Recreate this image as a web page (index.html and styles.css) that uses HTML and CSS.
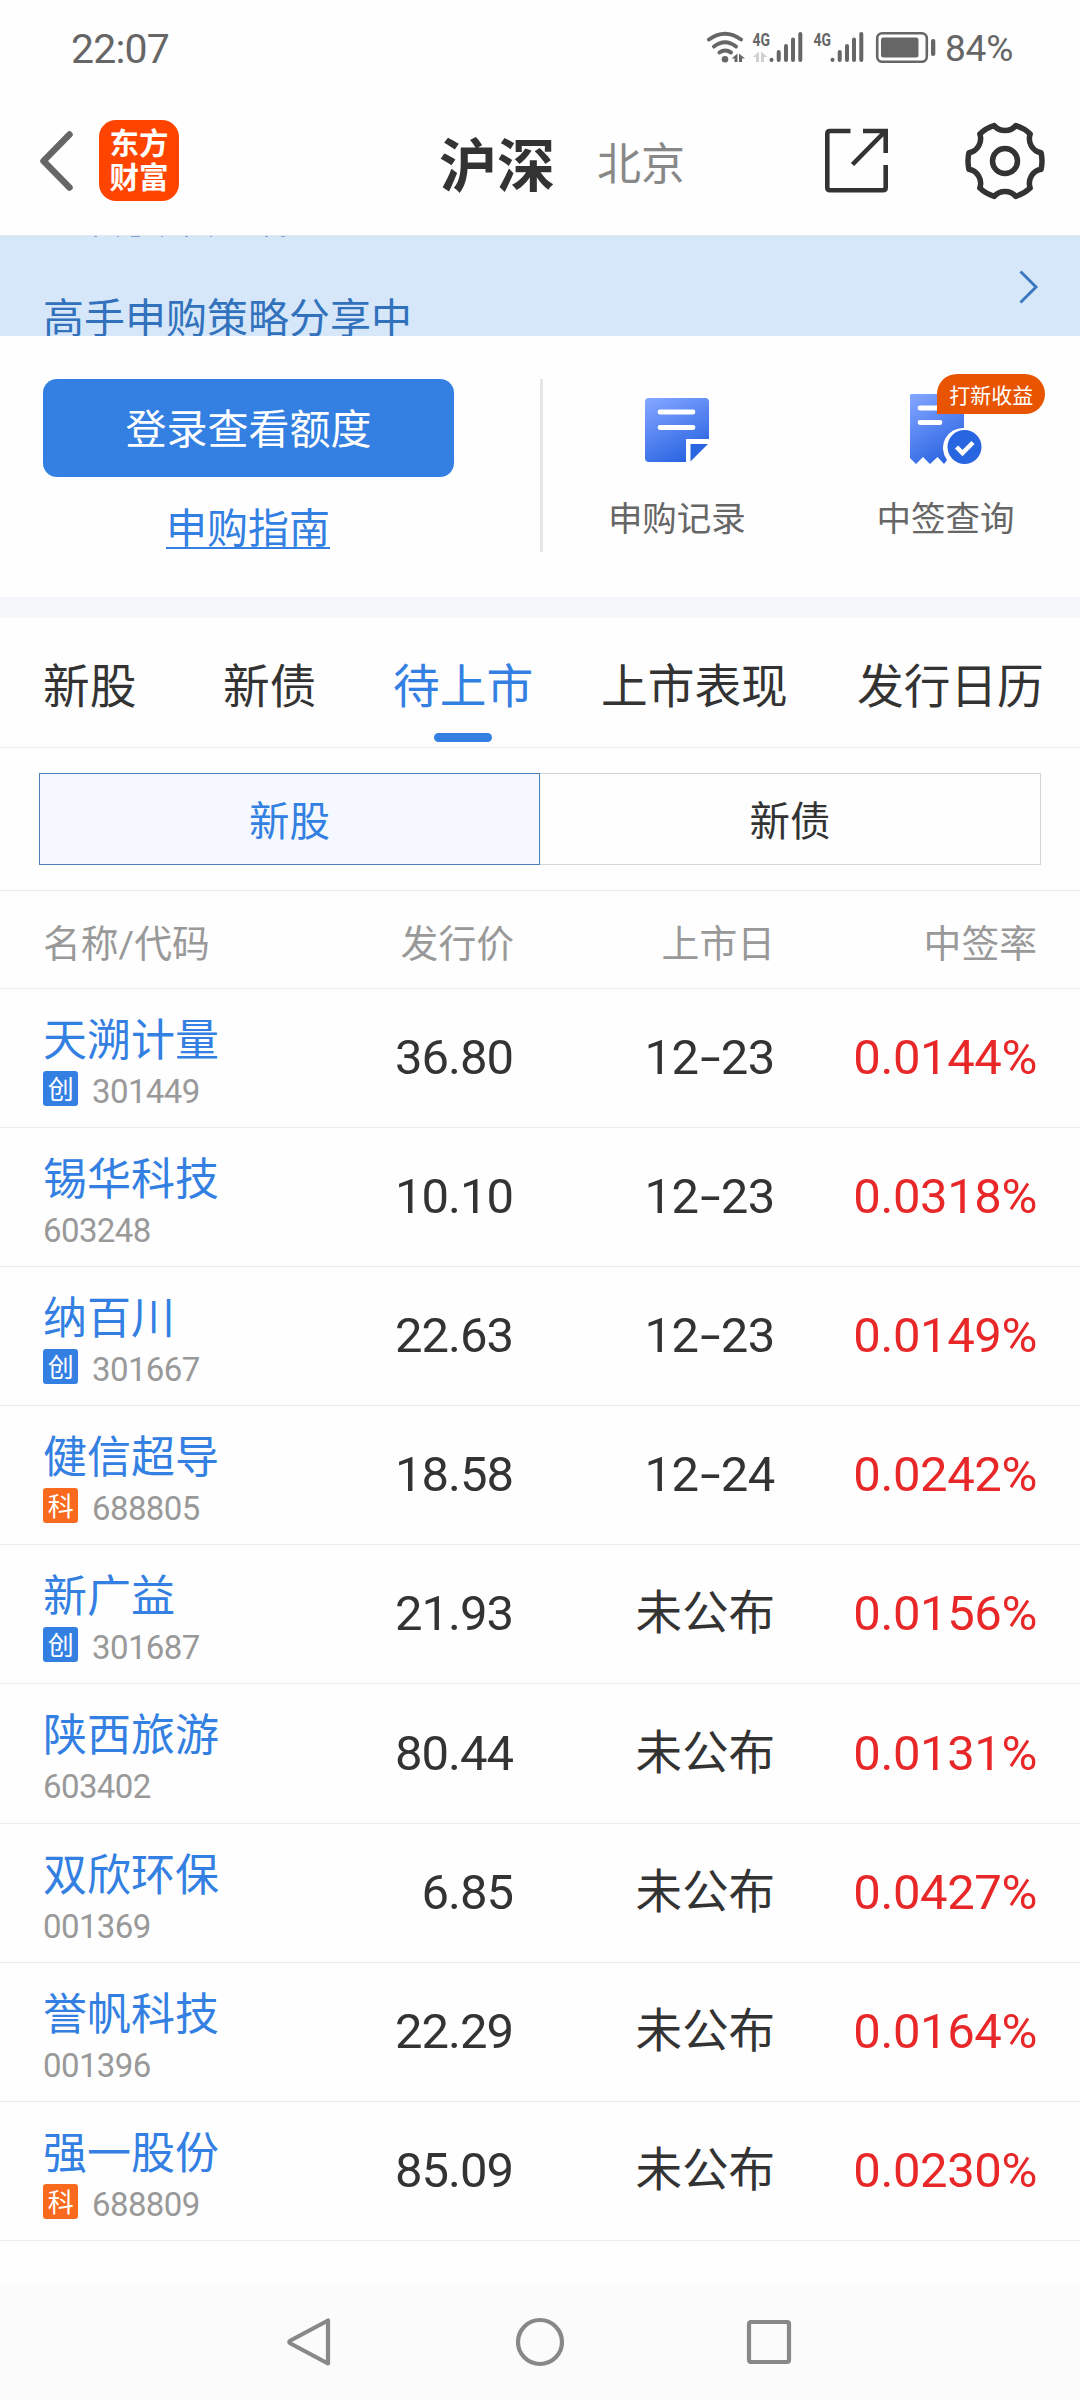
FILE: index.html
```
<!DOCTYPE html>
<html lang="zh-CN">
  <head>
    <meta charset="UTF-8" />
    <meta name="viewport" content="width=device-width, initial-scale=1.0" />
    <title>新股申购</title>
    <link rel="stylesheet" href="styles.css">
  </head>
  <body>
    <div class="status">
      <span class="time">22:07</span>
      <svg class="status-icons" width="232" height="40" viewBox="704 26 232 40">
        <!-- wifi -->
        <g fill="none" stroke="#666" stroke-width="4" stroke-linecap="round">
          <path d="M709 38.5Q725 27 741 38.5" />
          <path d="M714 45.500Q725 37 736 45.500" />
          <path d="M719.500 51.500Q725 47.500 731 51.500" />
        </g>
        <circle cx="725" cy="58.300" r="3.300" fill="#666" />
        <path d="M731.500 57.500L737.500 52.500V61H734.500V57.500ZM739 52.500L745 57.500H742V61H739Z" fill="#666" />
        <!-- sim 1 -->
        <text x="752.500" y="44.500" class="net" textLength="17.500" lengthAdjust="spacingAndGlyphs">4G</text>
        <path d="M753 56L759 50.500V61H756V56ZM761 50.500L767.500 56H764V61H761Z" fill="#d0d0d0" />
        <g fill="none" stroke="#666" stroke-width="4" stroke-linecap="round">
          <path d="M771.500 58.700V59M778.700 51V59M786 45V59M793 38.500V59M800.300 33V59" />
          <path d="M832.500 58.700V59M839.700 51V59M847 45V59M854 38.500V59M861.300 33V59" />
        </g>
        <!-- sim 2 -->
        <text x="813.500" y="44.500" class="net" textLength="17.500" lengthAdjust="spacingAndGlyphs">4G</text>
        <!-- battery -->
        <rect x="877.200" y="32.200" width="49.600" height="28.600" rx="5" fill="none" stroke="#666" stroke-width="2.600" />
        <rect x="881" y="36.500" width="37.500" height="20" rx="2.500" fill="#666" />
        <rect x="931" y="38" width="4.300" height="17" rx="2" fill="#666" />
      </svg>
      <span class="percent">84%</span>
    </div>

    <header>
      <svg class="back" width="36" height="62" viewBox="0 0 36 62">
        <path d="M30.500 4.500L4.500 31L30.500 57.500" fill="none" stroke="#666" stroke-width="6.500" stroke-linecap="round" stroke-linejoin="round" />
      </svg>
      <div class="logo">东方<br>财富</div>
      <h1>沪深</h1>
      <span class="market">北京</span>
      <svg class="share" width="66" height="66" viewBox="0 0 66 66">
        <g fill="none" stroke="#333" stroke-width="4.600">
          <path d="M26.500 3H6Q3.300 3 3.300 5.700V59.500Q3.300 62.200 6 62.200H59Q61.700 62.200 61.700 59.500V37" />
          <path d="M39 3H61.700V25M61 3.500L28.500 36.500" />
        </g>
      </svg>
      <svg class="gear" width="80" height="80" viewBox="0 0 80 80">
        <g fill="none" stroke="#333" stroke-width="5.500" stroke-linejoin="round">
          <path d="M76.050 31.680A37 37 0 0 1 76.050 48.320A14.200 14.200 0 0 0 65.230 67.060A37 37 0 0 1 50.820 75.380A14.200 14.200 0 0 0 29.180 75.380A37 37 0 0 1 14.770 67.060A14.200 14.200 0 0 0 3.950 48.320A37 37 0 0 1 3.950 31.680A14.200 14.200 0 0 0 14.770 12.940A37 37 0 0 1 29.180 4.620A14.200 14.200 0 0 0 50.820 4.620A37 37 0 0 1 65.230 12.940A14.200 14.200 0 0 0 76.050 31.680Z" />
          <circle cx="40" cy="40" r="12.500" />
        </g>
      </svg>
    </header>

    <div class="banner">
      <svg class="banner-prev" width="200" height="2" viewBox="93 0 200 2">
        <path d="M94 .5h3M117 .5h2M131 .5h9M161 .5h2M185 .5h3M210 .5h2M265 .5h3M281 .5h4" stroke="#7fa6d3" stroke-width="1" />
      </svg>
      <p>高手申购策略分享中</p>
      <svg class="arrow" width="20" height="34" viewBox="0 0 20 34">
        <path d="M1.500 1.500L17 17L1.500 32.500" fill="none" stroke="#3a78bf" stroke-width="2.900" />
      </svg>
    </div>

    <section class="quota">
      <div class="login">
        <button>登录查看额度</button>
        <a>申购指南</a>
      </div>
      <div class="shortcut">
        <svg width="72" height="72" viewBox="0 0 72 72">
          <defs>
            <linearGradient id="paper" x1="0.2" y1="0" x2="0.7" y2="1">
              <stop offset="0" stop-color="#7fa3ff" />
              <stop offset="1" stop-color="#2762e0" />
            </linearGradient>
          </defs>
          <path d="M8 4H64Q68 4 68 8V45H45V68H8Q4 68 4 64V8Q4 4 8 4Z" fill="url(#paper)" />
          <path d="M49.500 50H67L49.500 67.500Z" fill="#2a66e0" />
          <path d="M19 18H52M19 33.500H52" stroke="#fff" stroke-width="4.800" stroke-linecap="round" />
        </svg>
        <span>申购记录</span>
      </div>
      <div class="shortcut">
        <svg width="72" height="72" viewBox="1 0 72 72">
          <path d="M3 0H51Q55 0 55 4V34A20 20 0 0 0 38 66L35 70L28.500 63L21 70L14 63L7 70L0 63V3Q0 0 3 0Z" fill="url(#paper)" />
          <path d="M11 14H35M11 28.500H31" stroke="#fff" stroke-width="4.800" stroke-linecap="round" />
          <circle cx="55.500" cy="53" r="17" fill="#2865e0" />
          <path d="M47.500 53L53.500 59L64 48.500" fill="none" stroke="#fff" stroke-width="4.500" />
        </svg>
        <span>中签查询</span>
        <em class="tip">打新收益</em>
      </div>
    </section>

    <nav class="tabs">
      <a>新股</a>
      <a>新债</a>
      <a class="active">待上市</a>
      <a>上市表现</a>
      <a>发行日历</a>
    </nav>

    <div class="switch">
      <button class="selected">新股</button>
      <button>新债</button>
    </div>

    <main>
      <div class="row head">
        <span>名称/代码</span>
        <span>发行价</span>
        <span>上市日</span>
        <span>中签率</span>
      </div>
      <div class="row">
        <div class="stock"><h2>天溯计量</h2><p><i class="chuang">创</i>301449</p></div>
        <span class="price">36.80</span>
        <span>12<b>-</b>23</span>
        <span class="rate">0.0144%</span>
      </div>
      <div class="row">
        <div class="stock"><h2>锡华科技</h2><p>603248</p></div>
        <span class="price">10.10</span>
        <span>12<b>-</b>23</span>
        <span class="rate">0.0318%</span>
      </div>
      <div class="row">
        <div class="stock"><h2>纳百川</h2><p><i class="chuang">创</i>301667</p></div>
        <span class="price">22.63</span>
        <span>12<b>-</b>23</span>
        <span class="rate">0.0149%</span>
      </div>
      <div class="row">
        <div class="stock"><h2>健信超导</h2><p><i class="ke">科</i>688805</p></div>
        <span class="price">18.58</span>
        <span>12<b>-</b>24</span>
        <span class="rate">0.0242%</span>
      </div>
      <div class="row">
        <div class="stock"><h2>新广益</h2><p><i class="chuang">创</i>301687</p></div>
        <span class="price">21.93</span>
        <span class="unset">未公布</span>
        <span class="rate">0.0156%</span>
      </div>
      <div class="row">
        <div class="stock"><h2>陕西旅游</h2><p>603402</p></div>
        <span class="price">80.44</span>
        <span class="unset">未公布</span>
        <span class="rate">0.0131%</span>
      </div>
      <div class="row">
        <div class="stock"><h2>双欣环保</h2><p>001369</p></div>
        <span class="price">6.85</span>
        <span class="unset">未公布</span>
        <span class="rate">0.0427%</span>
      </div>
      <div class="row">
        <div class="stock"><h2>誉帆科技</h2><p>001396</p></div>
        <span class="price">22.29</span>
        <span class="unset">未公布</span>
        <span class="rate">0.0164%</span>
      </div>
      <div class="row">
        <div class="stock"><h2>强一股份</h2><p><i class="ke">科</i>688809</p></div>
        <span class="price">85.09</span>
        <span class="unset">未公布</span>
        <span class="rate">0.0230%</span>
      </div>
    </main>

    <footer>
      <svg width="50" height="50" viewBox="1.500 0 50 50">
        <path d="M43.500 3.500V46.500L6 26.500Q3.500 25 6 23.500Z" />
      </svg>
      <svg width="50" height="50" viewBox="0 0 50 50">
        <circle cx="25" cy="25" r="22" />
      </svg>
      <svg width="50" height="50" viewBox="0 0 50 50">
        <rect x="5" y="5" width="40" height="40" rx="2" />
      </svg>
    </footer>
  </body>
</html>
```
FILE: styles.css
```
* {
  margin: 0;
  padding: 0;
  box-sizing: border-box;
}
body {
  width: 1080px;
  height: 2400px;
  display: flex;
  flex-direction: column;
  background-color: #fefefe;
  color: #333;
  font-family: Roboto, "Noto Sans CJK SC", sans-serif;
  overflow: hidden;
}
svg {
  display: block;
  flex: none;
}
button {
  font-family: inherit;
  border: none;
}

/* status bar */
.status {
  height: 94px;
  display: flex;
  align-items: center;
  padding: 0 66px 0 71px;
  color: #666;
}
.time {
  font-size: 41px;
  letter-spacing: -0.8px;
  padding-top: 3px;
}
.status-icons {
  margin-left: auto;
}
.net {
  font-size: 19px;
  font-weight: bold;
  fill: #666;
}
.percent {
  width: 78px;
  padding: 3px 0 0 9px;
  font-size: 37px;
  letter-spacing: -0.2px;
}

/* title bar */
header {
  height: 142px;
  display: flex;
  align-items: center;
  padding: 0 35px 8px 39px;
  border-bottom: 1px solid #e4e8ee;
}
.logo {
  width: 80px;
  height: 81px;
  margin-left: 24px;
  padding-top: 8px;
  border-radius: 17px;
  background-color: #ff4400;
  color: #fff;
  font-size: 29.5px;
  font-weight: bold;
  line-height: 33.5px;
  text-align: center;
}
h1 {
  margin-left: 260px;
  padding-top: 12px;
  font-size: 58px;
  line-height: 60px;
}
.market {
  margin-left: 42px;
  padding-top: 9px;
  color: #888;
  font-size: 44px;
  line-height: 60px;
}
.share {
  margin-left: auto;
}
.gear {
  margin-left: 75px;
}

.banner {
  height: 100px;
  flex: none;
  position: relative;
  display: flex;
  justify-content: space-between;
  padding: 34px 41px 0 43px;
  background-color: #d6e7f9;
  overflow: hidden;
}
.banner p {
  padding-top: 19px;
  color: #3272bd;
  font-size: 41px;
  line-height: 60px;
}
.banner-prev {
  position: absolute;
  top: 0;
  left: 93px;
}

/* login and shortcuts */
.quota {
  height: 282px;
  flex: none;
  display: flex;
  padding-top: 43px;
  border-bottom: 21px solid #f6f7fa;
}
.login {
  width: 543px;
  height: 173px;
  padding-left: 43px;
  border-right: 3px solid #e5e5e5;
}
.login button {
  display: block;
  width: 411px;
  height: 98px;
  border-radius: 14px;
  background-color: #3380e2;
  color: #fff;
  font-size: 41px;
  line-height: 103px;
}
.login a {
  display: block;
  width: 164px;
  height: 48px;
  margin: 24px 0 0 123px;
  border-bottom: 2px solid #3380e2;
  color: #3380e2;
  font-size: 41px;
  line-height: 57px;
}
.shortcut {
  position: relative;
  width: 269px;
  display: flex;
  flex-direction: column;
  align-items: center;
  padding-top: 15px;
}
.shortcut span {
  margin-top: 28px;
  color: #666;
  font-size: 34.5px;
  line-height: 50px;
}
.tip {
  position: absolute;
  top: -5px;
  left: 126px;
  width: 108px;
  height: 40px;
  border-radius: 20px 20px 20px 0;
  background-color: #e85400;
  color: #fff;
  font-size: 21px;
  font-style: normal;
  line-height: 45px;
  text-align: center;
}

.tabs {
  height: 130px;
  flex: none;
  display: grid;
  grid-template-columns: 180px 170px 208px 256px 190px;
  padding-left: 43px;
  border-bottom: 1px solid #ececec;
  font-size: 46.7px;
  line-height: 138px;
}
.tabs .active {
  position: relative;
  color: #3380e2;
}
.tabs .active::after {
  content: "";
  position: absolute;
  left: 41px;
  bottom: 14px;
  width: 58px;
  height: 9px;
  border-radius: 5px;
  background-color: #3380e2;
}

.switch {
  height: 143px;
  flex: none;
  display: flex;
  padding: 25px 39px;
  border-bottom: 1px solid #ececec;
}
.switch button {
  flex: 1;
  height: 92px;
  border: 1px solid #d4d4d4;
  border-left: none;
  background-color: #fefefe;
  color: #333;
  font-size: 40.5px;
  line-height: 97px;
}
.switch .selected {
  flex: none;
  width: 501px;
  border: 1px solid #4a80b8;
  background-color: #f5f9ff;
  color: #3380e2;
}

/* stock list */
.row {
  height: 139.1px;
  display: grid;
  grid-template-columns: 209px 262px 261px 262px;
  align-items: center;
  padding: 0 43px;
  border-bottom: 1px solid #ececec;
  font-size: 49px;
  letter-spacing: -0.4px;
  line-height: 62px;
  text-align: right;
}
.head {
  height: 98px;
  padding-top: 8px;
  color: #999;
  font-size: 37.8px;
  letter-spacing: 0;
}
.head span:first-child {
  text-align: left;
}
.row b {
  display: inline-block;
  width: 22px;
  font-weight: normal;
  text-align: center;
  transform: scaleX(1.5);
}
.stock {
  align-self: start;
  padding-top: 22px;
  letter-spacing: 0;
  text-align: left;
}
.stock h2 {
  color: #3380e2;
  font-size: 44px;
  font-weight: normal;
  line-height: 60px;
}
.stock p {
  height: 35px;
  display: flex;
  color: #999;
  font-size: 33px;
  letter-spacing: -0.6px;
  line-height: 41px;
}
.stock i {
  width: 35px;
  height: 35px;
  margin-right: 14px;
  border-radius: 3px;
  color: #fff;
  font-size: 26px;
  font-style: normal;
  line-height: 38px;
  text-align: center;
}
.chuang {
  background-color: #3380e2;
}
.ke {
  background-color: #f96a1e;
}
.price {
  padding-right: 1px;
  letter-spacing: -1px;
}
.rate {
  color: #e82828;
}
.unset {
  padding-bottom: 2px;
  font-size: 46.5px;
  letter-spacing: 0;
}

footer {
  height: 116px;
  flex: none;
  display: flex;
  justify-content: center;
  align-items: center;
  gap: 179px;
  margin-top: auto;
  background-color: #fbfbfb;
}
footer svg {
  fill: none;
  stroke: #888;
  stroke-width: 4.2;
  stroke-linejoin: round;
}
footer svg:first-child {
  overflow: visible;
}
```
